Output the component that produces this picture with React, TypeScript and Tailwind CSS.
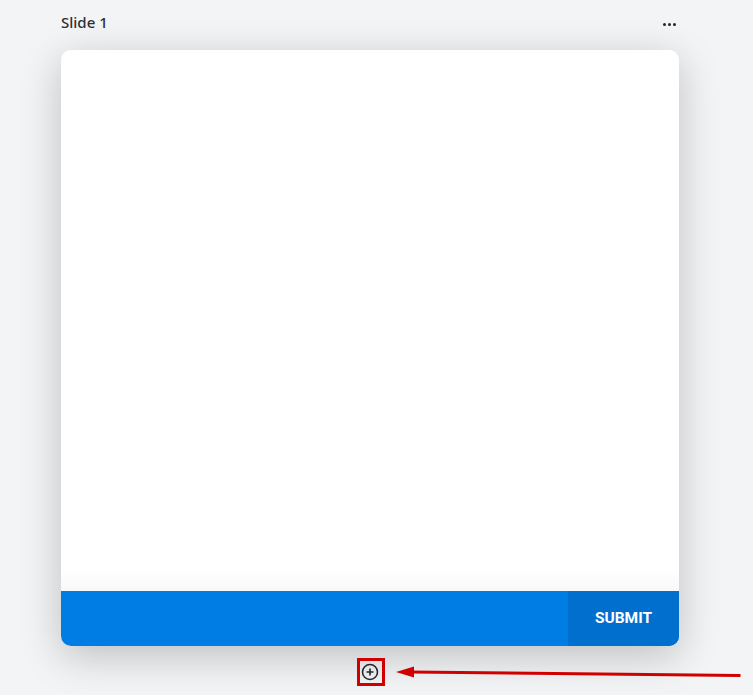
import React from 'react'

export default function App() {
  return (
    <div className="relative h-[695px] w-full overflow-hidden bg-[#f3f4f6] font-['Noto_Sans',sans-serif]">
      <div className="ml-[61px] w-[618px]">
        {/* Header */}
        <div className="flex h-[50px] items-start justify-between">
          <span className="mt-[12px] text-[15px] leading-[20px] font-medium text-[#2b2f35]">Slide 1</span>
          <div className="mt-[23px] mr-[3px] flex gap-[2px]">
            <span className="h-[3px] w-[3px] rounded-full bg-[#23272c]" />
            <span className="h-[3px] w-[3px] rounded-full bg-[#23272c]" />
            <span className="h-[3px] w-[3px] rounded-full bg-[#23272c]" />
          </div>
        </div>

        {/* Slide card */}
        <div className="flex h-[596px] flex-col overflow-hidden rounded-[10px] bg-white shadow-[0_10px_40px_rgba(0,0,0,0.22)]">
          <div className="flex-1 bg-gradient-to-b from-white from-[96%] to-[#f8f8f8]" />
          <div className="flex h-[55px] justify-end bg-[#007de4]">
            <button className="flex w-[111px] items-center justify-center bg-[#006fcd] font-['Roboto',sans-serif] text-[15.5px] font-bold text-white">
              SUBMIT
            </button>
          </div>
        </div>

        {/* Add slide */}
        <div className="mt-[12px] flex justify-center pl-[2px]">
          <button className="flex h-[28px] w-[28px] items-center justify-center border-[3px] border-[#d00000] pr-[2px]">
            <svg width="18" height="18" viewBox="0 0 18 18" fill="none" stroke="#24282e">
              <circle cx="9" cy="9" r="7.5" strokeWidth="1.6" />
              <path d="M9 5.5v7M5.5 9h7" strokeWidth="1.6" />
            </svg>
          </button>
        </div>
      </div>

      {/* Annotation arrow */}
      <svg className="absolute top-[660px] left-[390px]" width="363" height="30" viewBox="0 0 363 30">
        <path d="M350.500 15.500 L 20 12" stroke="#d00000" strokeWidth="3" fill="none" />
        <path d="M6 12 L 24 6.500 V 17.500 Z" fill="#d00000" />
      </svg>
    </div>
  )
}
